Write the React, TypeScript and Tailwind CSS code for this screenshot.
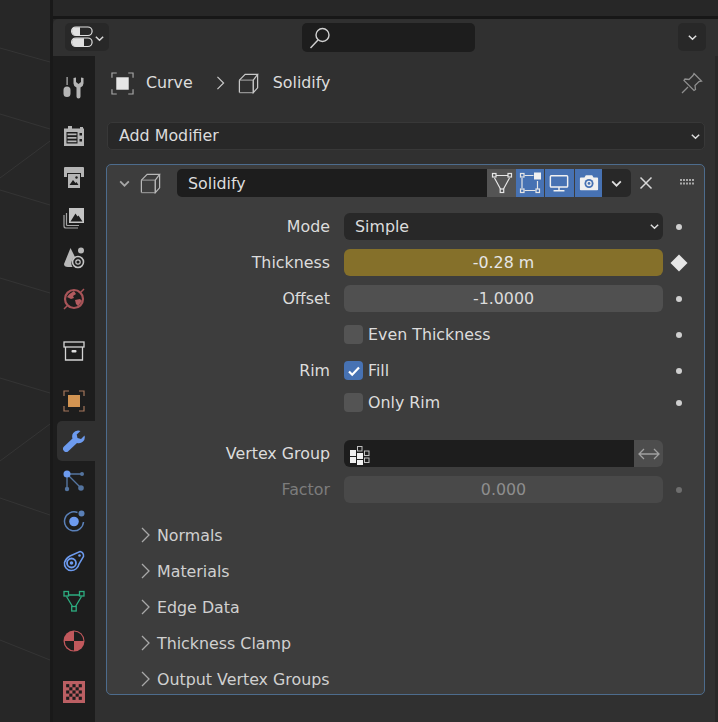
import type { ReactNode } from 'react'

const s = { fill: 'none', stroke: 'currentColor', strokeWidth: 1.3 }

function Chevron({ className = 'w-3 h-3' }: { className?: string }) {
  return (
    <svg viewBox="0 0 12 12" className={className} fill="none" stroke="currentColor" strokeWidth="1.6">
      <path d="M2 4l4 4 4-4" />
    </svg>
  )
}

function CubeIcon({ className = 'w-6 h-6' }: { className?: string }) {
  return (
    <svg viewBox="0 0 24 24" className={className} {...s}>
      <path d="M2.500 8.500h14.500v13h-14.500" opacity="0.65" />
      <path d="M2.500 8.500v13M2.500 8.500l6-6h13l-4.500 6M21.500 2.500v14l-4.500 5v-13" />
    </svg>
  )
}

function SelectBox({ className = 'w-6 h-6' }: { className?: string }) {
  return (
    <svg viewBox="0 0 24 24" className={className} fill="none" stroke="#a8a8a8" strokeWidth="1.2">
      <path d="M1 6V1h5M18 1h5v5M1 18v5h5M18 23h5v-5" />
      <rect x="5.500" y="5.500" width="13" height="13" fill="#e6e6e6" stroke="none" />
    </svg>
  )
}

// properties editor tabs, drawn in a 22 box
const tabIcons: { key: string; mt: string; node: ReactNode }[] = [
  {
    key: 'tool',
    mt: 'mt-0',
    node: (
      <svg viewBox="0 0 22 22" className="w-[22px] h-[22px]" fill="#b5b5b5">
        <rect x="3.500" y="0" width="1.200" height="8" />
        <path d="M0.500 13a3.500 3.500 0 0 1 3.500-3.500 3.500 3.500 0 0 1 3.500 3.500v3.500a3.500 3.500 0 0 1-7 0z" />
        <path d="M10.500 1l2.500-.5v4.500l2.500 2 2.500-2V.5l2.500.5v5.500q0 2.500-3 4v9a2 2 0 0 1-4 0v-9q-3-1.500-3-4z" />
      </svg>
    ),
  },
  {
    key: 'render',
    mt: 'mt-[9px]',
    node: (
      <svg viewBox="0 0 22 22" className="w-[22px] h-[22px]" fill="#b5b5b5">
        <path d="M5 0h4v2.500h8V1h3v1.500h1V20H1V2.500h4z" />
        <rect x="3.500" y="6" width="11" height="11.500" fill="#1d1d1d" />
        <rect x="4.500" y="7.500" width="9" height="1.700" />
        <rect x="4.500" y="11" width="9" height="1.700" />
        <rect x="4.500" y="14.500" width="9" height="1.700" />
        <rect x="16.500" y="7" width="2.500" height="2.500" fill="#1d1d1d" />
        <rect x="16.500" y="13" width="2.500" height="2.500" fill="#1d1d1d" />
      </svg>
    ),
  },
  {
    key: 'output',
    mt: 'mt-px',
    node: (
      <svg viewBox="0 0 22 22" className="w-[22px] h-[22px]" fill="#b5b5b5">
        <path d="M2 0h18a1 1 0 0 1 1 1v9h-3V6H4v4H1V1a1 1 0 0 1 1-1z" />
        <rect x="5" y="7" width="12" height="14" />
        <path d="M6.500 18l3.500-5 2.500 3 1-1 2 3z" fill="#1d1d1d" />
        <circle cx="13.500" cy="10.500" r="1.200" fill="#1d1d1d" />
      </svg>
    ),
  },
  {
    key: 'view',
    mt: 'mt-0',
    node: (
      <svg viewBox="0 0 22 22" className="w-[22px] h-[22px]">
        <path d="M1 8v11a2 2 0 0 0 2 2h12M3.500 6v11.500a1 1 0 0 0 1 1H16" fill="none" stroke="#a5a5a5" strokeWidth="1.200" />
        <rect x="6" y="1" width="15" height="15" fill="#c4c4c4" />
        <path d="M7.500 14.500l5-8 2 3 1-1 4 6z" fill="#1d1d1d" />
      </svg>
    ),
  },
  {
    key: 'scene',
    mt: 'mt-0',
    node: (
      <svg viewBox="0 0 22 22" className="w-[22px] h-[22px]">
        <path d="M7.500 1L1 17q0 3 4 3h4.500A7 7 0 0 1 12 10z" fill="#b8b8b8" />
        <circle cx="18" cy="3.500" r="3" fill="#b8b8b8" />
        <circle cx="15" cy="15" r="5.500" fill="#1d1d1d" stroke="#c4c4c4" strokeWidth="1.600" />
        <circle cx="15" cy="15" r="2.200" fill="none" stroke="#c4c4c4" strokeWidth="1.200" />
      </svg>
    ),
  },
  {
    key: 'world',
    mt: 'mt-px',
    node: (
      <svg viewBox="0 0 22 22" className="w-[22px] h-[22px]">
        <circle cx="11" cy="11" r="9" fill="#1d1d1d" stroke="#a85458" strokeWidth="2.200" />
        <path d="M4 9q3-4 7-6l2 3-3 2 1 2-3 1zM12 12l5-1 2 2-4 5-2-2z" fill="#b35b5f" />
        <path d="M1 21l3-3M18 4l3-3" stroke="#a85458" strokeWidth="1.500" />
      </svg>
    ),
  },
  {
    key: 'collection',
    mt: 'mt-3',
    node: (
      <svg viewBox="0 0 22 22" className="w-[22px] h-[22px]" fill="none" stroke="#d4d4d4" strokeWidth="1.300">
        <rect x="1" y="2" width="20" height="5" />
        <path d="M2.500 7v13h17V7" />
        <rect x="8.500" y="10" width="5" height="2.500" rx="1" fill="#e0e0e0" stroke="none" />
      </svg>
    ),
  },
  {
    key: 'object',
    mt: 'mt-[10px]',
    node: (
      <svg viewBox="0 0 22 22" className="w-[22px] h-[22px]" fill="none" stroke="#a5775c" strokeWidth="1.200">
        <path d="M1 6V1h5M16 1h5v5M1 16v5h5M16 21h5v-5" />
        <rect x="5" y="5" width="12" height="12" fill="#d29452" stroke="none" />
      </svg>
    ),
  },
  {
    key: 'modifier',
    mt: 'mt-0',
    node: (
      <svg viewBox="0 0 22 22" className="w-[22px] h-[22px]" fill="#6d9bef">
        <path d="M15 .5a6 6 0 0 0-5.500 8L1 16.500a3 3 0 0 0 4.500 4.500l8.500-8a6 6 0 0 0 7.500-7.500l-3.500 3.500-3.500-1-.8-3.500L17.500 1a6 6 0 0 0-2.500-.5z" />
      </svg>
    ),
  },
  {
    key: 'particles',
    mt: 'mt-0',
    node: (
      <svg viewBox="0 0 22 22" className="w-[22px] h-[22px]" stroke="#54749f" fill="#54749f">
        <path d="M4 4h15M4 4v15M4 4l14 14" fill="none" strokeWidth="1.400" />
        <circle cx="4" cy="4" r="3.500" fill="#6d9bef" stroke="none" />
        <circle cx="19" cy="4" r="2" stroke="none" />
        <circle cx="4" cy="19" r="2.200" stroke="none" />
        <circle cx="18" cy="18" r="2.800" stroke="none" />
      </svg>
    ),
  },
  {
    key: 'physics',
    mt: 'mt-0',
    node: (
      <svg viewBox="0 0 22 22" className="w-[22px] h-[22px]">
        <path d="M14.500 2.500A9.500 9.500 0 1 0 20.500 12" fill="none" stroke="#5a80b8" strokeWidth="1.500" />
        <circle cx="11" cy="11.500" r="4.800" fill="#6d9bef" />
        <circle cx="18.500" cy="3.500" r="3" fill="#5a80b8" />
      </svg>
    ),
  },
  {
    key: 'constraints',
    mt: 'mt-0',
    node: (
      <svg viewBox="0 0 22 22" className="w-[22px] h-[22px]" fill="none" stroke="#6d9bef">
        <path d="M17 1.500q4 1 3.500 5L16 14a8 8 0 0 1-8 6.500 7 7 0 0 1-6.500-8Q3 8 7 6z" strokeWidth="1.500" />
        <circle cx="8.500" cy="13" r="4.500" strokeWidth="1.800" />
        <circle cx="8.500" cy="13" r="1.800" fill="#6d9bef" stroke="none" />
        <circle cx="16.500" cy="5.500" r="1.300" fill="#6d9bef" stroke="none" />
      </svg>
    ),
  },
  {
    key: 'data',
    mt: 'mt-0',
    node: (
      <svg viewBox="0 0 22 22" className="w-[22px] h-[22px]" fill="none" stroke="#2dad80" strokeWidth="1.300">
        <path d="M5.500 5h11M3.500 6.500l6 10M18.500 6.500l-6 10" />
        <rect x="1" y="1.500" width="4.500" height="4.500" />
        <rect x="16.500" y="1.500" width="4.500" height="4.500" />
        <rect x="8.700" y="16.500" width="4.500" height="4.500" />
      </svg>
    ),
  },
  {
    key: 'material',
    mt: 'mt-0',
    node: (
      <svg viewBox="0 0 22 22" className="w-[22px] h-[22px]">
        <circle cx="11" cy="11" r="10.500" fill="#c1585c" />
        <path d="M11 1.500A9.500 9.500 0 0 1 20.500 11H11zM11 11H1.800A9.500 9.500 0 0 0 11 20.500z" fill="#1d1d1d" />
      </svg>
    ),
  },
  {
    key: 'texture',
    mt: 'mt-[11px]',
    node: (
      <svg viewBox="0 0 21 21" className="w-[22px] h-[22px]">
        <rect width="21" height="21" fill="#bb5f63" />
        {[
          [3, 3], [9, 3], [15, 3], [6, 6], [12, 6], [3, 9], [9, 9], [15, 9], [6, 12], [12, 12], [3, 15], [9, 15], [15, 15],
        ].map(([x, y]) => (
          <rect key={`${x}-${y}`} x={x} y={y} width="3" height="3" fill="#1d1d1d" />
        ))}
      </svg>
    ),
  },
]

function Dot({ dim }: { dim?: boolean }) {
  return <span className={`block w-[6px] h-[6px] rounded-full ${dim ? 'bg-[#6e6e6e]' : 'bg-[#cfcfcf]'}`} />
}

function Row({ label, children, dot, dim, className = '' }: { label?: string; children: ReactNode; dot?: ReactNode; dim?: boolean; className?: string }) {
  return (
    <div className={`flex items-center ${className}`}>
      <div className={`w-[237px] pr-[14px] text-right ${dim ? 'text-[#7c7c7c]' : 'text-[#dcdcdc]'}`}>{label}</div>
      <div className="w-[319px] shrink-0">{children}</div>
      <div className="w-[31px] flex justify-center">{dot ?? <Dot />}</div>
    </div>
  )
}

function Check({ label, checked }: { label: string; checked?: boolean }) {
  return (
    <div className="flex items-center gap-[5px] text-[#dcdcdc]">
      <span className={`w-[19px] h-[19px] rounded-[4px] flex items-center justify-center ${checked ? 'bg-[#4772b3]' : 'bg-[#545454]'}`}>
        {checked && (
          <svg viewBox="0 0 14 14" className="w-[14px] h-[14px]" fill="none" stroke="#fff" strokeWidth="2.200">
            <path d="M2 7.500l3.200 3.200L12 3.500" />
          </svg>
        )}
      </span>
      {label}
    </div>
  )
}

function Subpanel({ label }: { label: string }) {
  return (
    <div className="h-[36px] flex items-center pl-[34px] gap-[7px] text-[#d0d0d0]">
      <svg viewBox="0 0 9 16" className="w-[9px] h-[16px] -mt-[3px]" fill="none" stroke="#a8a8a8" strokeWidth="1.300">
        <path d="M1 1l7 7-7 7" />
      </svg>
      {label}
    </div>
  )
}

export default function App() {
  return (
    <div
      className="w-[718px] h-[722px] overflow-hidden flex bg-[#272727] text-[15.85px] leading-none"
      style={{ fontFamily: '"DejaVu Sans", sans-serif' }}
    >
      {/* 3d viewport remains */}
      <svg viewBox="0 0 50 722" className="w-[50px] h-[722px] shrink-0" fill="none" stroke="#353535" strokeWidth="1">
        <path d="M0 48l50 14M0 114l50 15M0 178l50-37M0 190l50 15M0 278l50 15M0 378l50 15M0 461l50-37M0 498l50 17M0 640l50 20" />
      </svg>
      <div className="w-[3px] bg-[#191919] shrink-0" />

      <div className="flex-1 flex flex-col min-w-0">
        <div className="h-[16px] bg-[#272727] shrink-0" />
        <div className="h-[3px] bg-[#171717] shrink-0" />

        {/* header */}
        <div className="h-[37px] shrink-0 bg-[#303030] rounded-tl-[5px] pt-[4px] pr-[12px] pl-[12px] flex items-start">
          <div className="w-[44px] h-[28px] rounded-[5px] bg-[#282828] flex items-center pl-[6px] gap-[1px] text-[#d8d8d8]">
            <svg viewBox="0 0 22 22" className="w-[22px] h-[22px]" fill="none" stroke="#e0e0e0" strokeWidth="1.200">
              <rect x="0.600" y="1" width="20.500" height="8.500" rx="4.250" />
              <rect x="0.600" y="12" width="20.500" height="8.500" rx="4.250" />
              <path d="M5 1.200h0a4 4 0 0 0 0 8h4V1.200zM5 12.200a4 4 0 0 0 0 8h8v-8z" fill="#e0e0e0" stroke="none" />
            </svg>
            <Chevron className="w-[11px] h-[11px] mt-[3px]" />
          </div>
          <div className="ml-[193px] w-[173px] h-[29px] rounded-[5px] bg-[#1d1d1d] flex items-center pl-[7px]">
            <svg viewBox="0 0 22 22" className="w-[22px] h-[22px]" fill="none" stroke="#d0d0d0" strokeWidth="1.400">
              <circle cx="13.500" cy="8" r="6.500" />
              <path d="M9 13l-7.500 8" />
            </svg>
          </div>
          <div className="ml-auto w-[28px] h-[28px] rounded-[5px] bg-[#282828] flex items-center justify-center text-[#e0e0e0]">
            <Chevron className="w-[11px] h-[11px]" />
          </div>
        </div>

        <div className="flex-1 flex min-h-0">
          {/* tabs */}
          <div className="w-[42px] shrink-0 bg-[#1d1d1d] pt-[12px] flex flex-col">
            {tabIcons.map((t) => (
              <div
                key={t.key}
                className={`${t.mt} h-[40px] shrink-0 flex items-center justify-center ${t.key === 'modifier' ? 'ml-[4px] pr-[4px] bg-[#303030] rounded-l-[5px]' : ''}`}
              >
                {t.node}
              </div>
            ))}
          </div>

          {/* properties */}
          <div className="flex-1 min-w-0 bg-[#303030] pl-[12px] pr-[10px] pt-[15px]">
            <div className="flex items-center h-[24px] text-[#dcdcdc]">
              <SelectBox className="w-[23px] h-[23px] ml-[4px]" />
              <span className="ml-[12px]">Curve</span>
              <svg viewBox="0 0 9 16" className="w-[9px] h-[14px] ml-[23px]" fill="none" stroke="#c8c8c8" strokeWidth="1.400">
                <path d="M1 1l7 7-7 7" />
              </svg>
              <CubeIcon className="w-[23px] h-[23px] ml-[12px] text-[#c8c8c8]" />
              <span className="ml-[13px]">Solidify</span>
              <svg viewBox="0 0 22 22" className="w-[22px] h-[22px] ml-auto mr-[2px]" fill="none" stroke="#8e8e8e" strokeWidth="1.300">
                <path d="M13 1.500l7.500 7.500-2.500.5-4 4 .5 4-1.500 1-10-10 1-1.500 4 .5 4-4zM7 15l-6 6" />
              </svg>
            </div>

            <div className="mt-[27px] h-[28px] rounded-[5px] bg-[#282828] border border-[#383838] flex items-center pl-[11px] pr-[3px] text-[#dcdcdc]">
              Add Modifier
              <Chevron className="w-[11px] h-[11px] ml-auto" />
            </div>

            {/* modifier panel */}
            <div className="mt-[14px] -ml-px h-[531px] rounded-[5px] bg-[#3d3d3d] border border-[#4d6c8d] overflow-hidden">
              <div className="flex items-center h-[28px] mt-[4px]">
                <Chevron className="w-[13px] h-[13px] ml-[11px] text-[#a8a8a8]" />
                <CubeIcon className="w-[23px] h-[23px] ml-[8px] text-[#b8b8b8]" />
                <div className="ml-[15px] w-[310px] h-[28px] pt-px bg-[#1d1d1d] rounded-l-[5px] flex items-center pl-[11px] text-[#dcdcdc]">Solidify</div>
                <div className="w-[29px] h-[28px] bg-[#545454] flex items-center justify-center">
                  <svg viewBox="0 0 22 22" className="w-[22px] h-[22px]" fill="none" stroke="#e6e6e6" strokeWidth="1.200">
                    <path d="M5 3.500h12M3.500 6l6 11M18.500 6l-6 11" />
                    <rect x="1.500" y="1.500" width="3.500" height="3.500" />
                    <rect x="17" y="1.500" width="3.500" height="3.500" />
                    <rect x="9.200" y="17" width="3.500" height="3.500" />
                  </svg>
                </div>
                <div className="w-[28px] h-[28px] bg-[#4772b3] flex items-center justify-center">
                  <svg viewBox="0 0 22 22" className="w-[22px] h-[22px]" fill="none" stroke="#e6e6e6" strokeWidth="1.200">
                    <path d="M3 6v10M5.500 3.500h9M18.500 9v8M5.500 18.500h11" />
                    <rect x="1.500" y="1.500" width="3.500" height="3.500" />
                    <rect x="1.500" y="17" width="3.500" height="3.500" />
                    <rect x="17" y="17" width="3.500" height="3.500" />
                    <rect x="15" y="0.500" width="7" height="7" fill="#f0f0f0" stroke="none" />
                  </svg>
                </div>
                <div className="w-[29px] h-[28px] bg-[#4772b3] ml-px pr-px flex items-center justify-center">
                  <svg viewBox="0 0 22 22" className="w-[20px] h-[20px]" fill="none" stroke="#f0f0f0" strokeWidth="1.600">
                    <rect x="1.500" y="3" width="19" height="12.500" rx="1" />
                    <path d="M11 15.500v3.500M5 19.500h12" />
                  </svg>
                </div>
                <div className="w-[28px] h-[28px] bg-[#4772b3] flex items-center justify-center border-l border-[#3d3d3d]">
                  <svg viewBox="0 0 22 22" className="w-[20px] h-[20px]">
                    <path d="M1 6a1 1 0 0 1 1-1h4l1.500-2.500h7L16 5h4a1 1 0 0 1 1 1v12a1 1 0 0 1-1 1H2a1 1 0 0 1-1-1z" fill="#f0f0f0" />
                    <circle cx="11" cy="11.500" r="5" fill="#4772b3" />
                    <circle cx="11" cy="11.500" r="3" fill="#f0f0f0" />
                    <circle cx="11" cy="11.500" r="1.500" fill="#4772b3" />
                  </svg>
                </div>
                <div className="w-[29px] h-[28px] bg-[#282828] rounded-r-[5px] flex items-center justify-center text-[#e0e0e0]">
                  <Chevron className="w-[13px] h-[13px]" />
                </div>
                <svg viewBox="0 0 14 14" className="w-[14px] h-[14px] ml-[8px]" fill="none" stroke="#d8d8d8" strokeWidth="1.500">
                  <path d="M1.500 1.500l11 11M12.500 1.500l-11 11" />
                </svg>
                <svg viewBox="0 0 14 6" className="w-[14px] h-[6px] ml-[27px] -mt-[2px]" fill="#a8a8a8">
                  {[0, 3, 6, 9, 12].map((x) => (
                    <g key={x}>
                      <rect x={x} y="0" width="2" height="2" />
                      <rect x={x} y="3.500" width="2" height="2" />
                    </g>
                  ))}
                </svg>
              </div>

              <Row label="Mode" className="mt-[16px]">
                <div className="h-[27px] rounded-[6px] bg-[#282828] flex items-center pl-[11px] pr-[3px] text-[#dcdcdc]">
                  Simple
                  <Chevron className="w-[11px] h-[11px] ml-auto" />
                </div>
              </Row>
              <Row
                label="Thickness"
                className="mt-[9px]"
                dot={<span className="block w-[12px] h-[12px] rotate-45 bg-[#e6e6e6]" />}
              >
                <div className="h-[27px] rounded-[6px] bg-[#85702a] flex items-center justify-center text-[#e6e6e6]">-0.28 m</div>
              </Row>
              <Row label="Offset" className="mt-[9px]">
                <div className="h-[27px] rounded-[6px] bg-[#505050] flex items-center justify-center text-[#dcdcdc]">-1.0000</div>
              </Row>
              <Row className="mt-[13px]">
                <Check label="Even Thickness" />
              </Row>
              <Row label="Rim" className="mt-[17px]">
                <Check label="Fill" checked />
              </Row>
              <Row className="mt-[13px]">
                <Check label="Only Rim" />
              </Row>
              <Row className="mt-[28px]" label="Vertex Group" dot={<span />}>
                <div className="flex h-[27px]">
                  <div className="flex-1 bg-[#1d1d1d] rounded-l-[6px] flex items-center pl-[5px]">
                    <svg viewBox="0 0 22 22" className="w-[22px] h-[22px]">
                      <rect x="1" y="7" width="6" height="6" fill="#f0f0f0" />
                      <rect x="1" y="14" width="6" height="6" fill="#f0f0f0" />
                      <rect x="8" y="10" width="6" height="6" fill="#f0f0f0" />
                      <rect x="8" y="17" width="6" height="5" fill="#f0f0f0" />
                      <g fill="none" stroke="#c0c0c0" strokeWidth="1">
                        <rect x="8.500" y="3.500" width="4.500" height="4.500" />
                        <rect x="15.500" y="8" width="4.500" height="4.500" />
                        <rect x="15.500" y="15" width="4.500" height="4.500" />
                      </g>
                    </svg>
                  </div>
                  <div className="w-[29px] bg-[#4d4d4d] rounded-r-[6px] flex items-center justify-center">
                    <svg viewBox="0 0 22 14" className="w-[22px] h-[14px]" fill="none" stroke="#a0a0a0" strokeWidth="1.300">
                      <path d="M1 7h20M6 2L1 7l5 5M16 2l5 5-5 5" />
                    </svg>
                  </div>
                </div>
              </Row>
              <Row label="Factor" dim className="mt-[9px]" dot={<Dot dim />}>
                <div className="h-[27px] rounded-[6px] bg-[#494949] flex items-center justify-center text-[#8e8e8e]">0.000</div>
              </Row>

              <div className="mt-[15px]">
                {['Normals', 'Materials', 'Edge Data', 'Thickness Clamp', 'Output Vertex Groups'].map((l) => (
                  <Subpanel key={l} label={l} />
                ))}
              </div>
            </div>
          </div>
          <div className="w-[3px] shrink-0 bg-[#282828]" />
        </div>
      </div>
    </div>
  )
}
